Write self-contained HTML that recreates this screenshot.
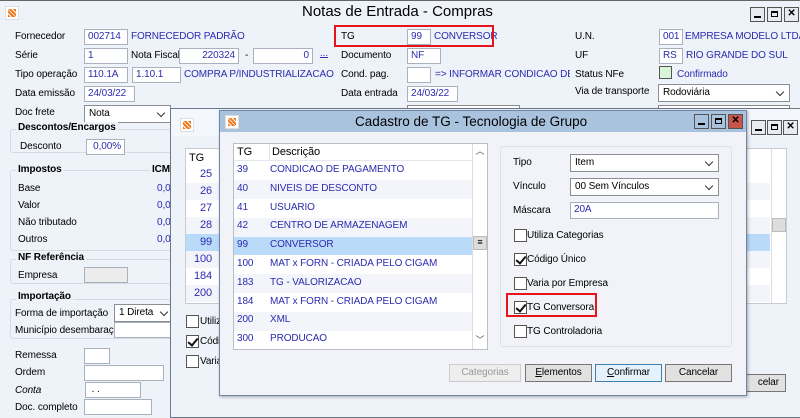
<!DOCTYPE html>
<html><head><meta charset="utf-8"><style>
*{box-sizing:border-box;margin:0;padding:0}
body{width:800px;height:409px;overflow:hidden;background:#eef2f9;font-family:"Liberation Sans",sans-serif;font-size:10px;letter-spacing:-0.1px;color:#000;position:relative}
.a{position:absolute;white-space:nowrap}
.in{position:absolute;background:#fff;border:1px solid #a9b1bd;height:16px;line-height:14px;padding:0 3px;color:#2b2bb0;white-space:nowrap;overflow:hidden}
.bl{color:#2b2bb0}
.sel{position:absolute;background:#fff;border:1px solid #8a8f96;height:18px;line-height:16px;padding:0 4px}
.sel:after{content:"";position:absolute;right:6px;top:4px;width:5px;height:5px;border-right:1.5px solid #333;border-bottom:1.5px solid #333;transform:rotate(45deg)}
.grp{position:absolute;border:1px solid #d6dbe3;border-radius:3px}
.gt{position:absolute;font-weight:bold;background:#eef2f9;padding:0 2px}
.ic{position:absolute;width:14px;height:14px;background:#fff;border:1px solid #ddd}
.ic:after{content:"";position:absolute;left:2px;top:2px;width:8px;height:8px;background:repeating-linear-gradient(45deg,#f07a20 0 2px,#fff 2px 3px)}
.cb{position:absolute;width:13px;height:13px;border:1px solid #555;background:#fff}
.ck:after{content:"";position:absolute;left:3px;top:0px;width:4px;height:8px;border-right:2px solid #111;border-bottom:2px solid #111;transform:rotate(40deg)}
.wb{position:absolute;width:15px;height:15px;border:1px solid #555;background:#e8ecf2}
.btn{position:absolute;height:18px;border:1px solid #777;background:#e1e1e1;text-align:center;line-height:16px}
</style></head><body>
<div class="a" style="left:0;top:0;width:800px;height:1px;background:#666"></div>
<div class="ic" style="left:5px;top:6px"></div>
<div class="a" style="left:302px;top:3px;font-size:15px;letter-spacing:0">Notas de Entrada - Compras</div>
<div class="wb" style="left:750px;top:7px"><div style="position:absolute;left:3px;top:8px;width:7px;height:2px;background:#000"></div></div>
<div class="wb" style="left:767px;top:7px"><div style="position:absolute;left:3px;top:3px;width:7px;height:6px;border:1px solid #000;border-top-width:2px"></div></div>
<div class="wb" style="left:784px;top:7px;text-align:center;line-height:12px;font-weight:bold">✕</div>

<div class="a" style="left:15px;top:31px">Fornecedor</div>
<div class="in" style="left:84px;top:29px;width:44px">002714</div>
<div class="a bl" style="left:131px;top:31px">FORNECEDOR PADRÃO</div>
<div class="a" style="left:15px;top:50px">Série</div>
<div class="in" style="left:84px;top:48px;width:44px">1</div>
<div class="a" style="left:131px;top:50px">Nota Fiscal</div>
<div class="in" style="left:179px;top:48px;width:60px;text-align:right">220324</div>
<div class="a" style="left:245px;top:50px">-</div>
<div class="in" style="left:253px;top:48px;width:60px;text-align:right">0</div>
<div class="a bl" style="left:320px;top:48px;text-decoration:underline">...</div>
<div class="a" style="left:15px;top:69px">Tipo operação</div>
<div class="in" style="left:84px;top:67px;width:44px">110.1A</div>
<div class="in" style="left:132px;top:67px;width:49px">1.10.1</div>
<div class="a bl" style="left:184px;top:69px;width:150px;overflow:hidden">COMPRA P/INDUSTRIALIZACAO C/IC</div>
<div class="a" style="left:15px;top:88px">Data emissão</div>
<div class="in" style="left:84px;top:86px;width:51px">24/03/22</div>
<div class="a" style="left:15px;top:107px">Doc frete</div>
<div class="sel" style="left:84px;top:105px;width:87px;color:#000">Nota</div>

<div class="grp" style="left:10px;top:129px;width:165px;height:24px"></div>
<div class="gt" style="left:16px;top:122px">Descontos/Encargos</div>
<div class="a" style="left:20px;top:141px">Desconto</div>
<div class="in" style="left:86px;top:139px;width:39px;text-align:right">0,00%</div>

<div class="grp" style="left:10px;top:170px;width:165px;height:81px"></div>
<div class="gt" style="left:16px;top:164px">Impostos</div>
<div class="gt" style="left:150px;top:164px">ICM</div>
<div class="a" style="left:18px;top:183px">Base</div><div class="a bl" style="left:157px;top:183px">0,0</div>
<div class="a" style="left:18px;top:200px">Valor</div><div class="a bl" style="left:157px;top:200px">0,0</div>
<div class="a" style="left:18px;top:217px">Não tributado</div><div class="a bl" style="left:157px;top:217px">0,0</div>
<div class="a" style="left:18px;top:234px">Outros</div><div class="a bl" style="left:157px;top:234px">0,0</div>

<div class="grp" style="left:10px;top:259px;width:165px;height:25px"></div>
<div class="gt" style="left:16px;top:252px">NF Referência</div>
<div class="a" style="left:18px;top:270px">Empresa</div>
<div class="in" style="left:84px;top:267px;width:44px;background:#ececec"></div>

<div class="grp" style="left:10px;top:299px;width:165px;height:40px"></div>
<div class="gt" style="left:16px;top:291px">Importação</div>
<div class="a" style="left:15px;top:308px">Forma de importação</div>
<div class="sel" style="left:114px;top:304px;width:60px;color:#000">1 Direta</div>
<div class="a" style="left:15px;top:325px">Município desembaraço</div>
<div class="in" style="left:114px;top:322px;width:60px"></div>

<div class="a" style="left:15px;top:350px">Remessa</div><div class="in" style="left:84px;top:348px;width:26px"></div>
<div class="a" style="left:15px;top:367px">Ordem</div><div class="in" style="left:84px;top:365px;width:80px"></div>
<div class="a" style="left:15px;top:385px;font-style:italic">Conta</div><div class="in" style="left:85px;top:382px;width:56px;color:#000">&nbsp;. .</div>
<div class="a" style="left:15px;top:402px">Doc. completo</div><div class="in" style="left:84px;top:399px;width:68px"></div>

<div class="a" style="left:341px;top:50px">Documento</div>
<div class="in" style="left:407px;top:48px;width:34px">NF</div>
<div class="a" style="left:341px;top:69px">Cond. pag.</div>
<div class="in" style="left:407px;top:67px;width:24px"></div>
<div class="a bl" style="left:435px;top:69px;width:135px;overflow:hidden">=&gt; INFORMAR CONDICAO DE PAG</div>
<div class="a" style="left:341px;top:88px">Data entrada</div>
<div class="in" style="left:407px;top:86px;width:51px">24/03/22</div>
<div class="in" style="left:407px;top:105px;width:113px;border-color:#888"></div>

<div class="a" style="left:341px;top:31px">TG</div>
<div class="in" style="left:407px;top:29px;width:24px">99</div>
<div class="a bl" style="left:434px;top:31px">CONVERSOR</div>
<div class="a" style="left:334px;top:25px;width:160px;height:22px;border:2px solid #e8141c"></div>

<div class="a" style="left:575px;top:31px">U.N.</div>
<div class="in" style="left:659px;top:29px;width:24px">001</div>
<div class="a bl" style="left:685px;top:31px">EMPRESA MODELO LTDA</div>
<div class="a" style="left:575px;top:50px">UF</div>
<div class="in" style="left:659px;top:48px;width:24px">RS</div>
<div class="a bl" style="left:686px;top:50px">RIO GRANDE DO SUL</div>
<div class="a" style="left:575px;top:69px">Status NFe</div>
<div class="a" style="left:659px;top:66px;width:13px;height:13px;background:#d8f5d8;border:1px solid #555"></div>
<div class="a bl" style="left:677px;top:69px">Confirmado</div>
<div class="a" style="left:575px;top:86px">Via de transporte</div>
<div class="sel" style="left:658px;top:84px;width:132px;color:#000">Rodoviária</div>
<div class="in" style="left:658px;top:105px;width:132px;border-color:#888"></div>

<!-- middle window -->
<div class="a" style="left:170px;top:108px;width:640px;height:310px;background:#eef2f9;border:1px solid #6b7788"></div>
<div class="a" style="left:171px;top:109px;width:640px;height:27px;background:#f4f7fc"></div>
<div class="ic" style="left:180px;top:118px"></div>
<div class="wb" style="left:751px;top:120px"><div style="position:absolute;left:3px;top:8px;width:7px;height:2px;background:#000"></div></div>
<div class="wb" style="left:767px;top:120px"><div style="position:absolute;left:3px;top:3px;width:7px;height:6px;border:1px solid #000;border-top-width:2px"></div></div>
<div class="wb" style="left:783px;top:120px;text-align:center;line-height:12px;font-weight:bold">✕</div>
<div class="a" style="left:185px;top:148px;width:602px;height:156px;background:#fff;border:1px solid #c7ccd4"></div>
<div class="a" style="left:186px;top:149px;width:33px;height:18px;line-height:18px;padding-left:3px;font-size:11px">TG</div>
<div class="a" style="left:186px;top:183px;width:584px;height:17px;background:#f3f5fa"></div>
<div class="a" style="left:186px;top:217px;width:584px;height:17px;background:#f3f5fa"></div>
<div class="a" style="left:186px;top:234px;width:584px;height:17px;background:#b9dbf9"></div>
<div class="a" style="left:186px;top:251px;width:584px;height:17px;background:#f3f5fa"></div>
<div class="a" style="left:186px;top:285px;width:584px;height:17px;background:#f3f5fa"></div>
<div class="a bl" style="left:186px;top:166px;width:26px;text-align:right;line-height:17px;font-size:11px">25<br>26<br>27<br>28<br>99<br>100<br>184<br>200</div>
<div class="a" style="left:771px;top:149px;width:15px;height:154px;background:#fff;border-left:1px solid #ddd"></div>
<div class="a" style="left:772px;top:218px;width:14px;height:14px;background:#ddd;border:1px solid #bbb"></div>
<div class="cb" style="left:186px;top:315px"></div><div class="a" style="left:200px;top:316px">Utiliz</div>
<div class="cb ck" style="left:186px;top:335px"></div><div class="a" style="left:200px;top:336px">Códig</div>
<div class="cb" style="left:186px;top:355px"></div><div class="a" style="left:200px;top:356px">Varia</div>
<div class="btn" style="left:735px;top:374px;width:51px;text-align:right;padding-right:6px">celar</div>

<!-- dialog -->
<div class="a" style="left:219px;top:110px;width:528px;height:286px;background:#f1f3f9;border:1px solid #6e87a8;box-shadow:1px 1px 3px rgba(0,0,0,.3)"></div>
<div class="a" style="left:220px;top:111px;width:526px;height:21px;background:#a9c3de"></div>
<div class="ic" style="left:225px;top:115px"></div>
<div class="a" style="left:355px;top:114px;font-size:13.5px;letter-spacing:0">Cadastro de TG - Tecnologia de Grupo</div>
<div class="wb" style="left:694px;top:114px;background:#a9c3de"><div style="position:absolute;left:3px;top:8px;width:7px;height:2px;background:#000"></div></div>
<div class="wb" style="left:711px;top:114px;background:#a9c3de"><div style="position:absolute;left:3px;top:3px;width:7px;height:6px;border:1px solid #000;border-top-width:2px"></div></div>
<div class="wb" style="left:728px;top:114px;background:#c9554a;text-align:center;line-height:12px;font-weight:bold">✕</div>

<div class="a" style="left:233px;top:143px;width:255px;height:207px;background:#fff;border:1px solid #b9bec6"></div>
<div class="a" style="left:234px;top:144px;width:238px;height:17px;border-bottom:1px solid #e4e7ec;line-height:16px;font-size:11px"><span style="position:absolute;left:3px">TG</span><span style="position:absolute;left:35px;top:0;height:16px;border-left:1px solid #e0e3e8"></span><span style="position:absolute;left:38px">Descrição</span></div>
<div class="a" style="left:234px;top:180px;width:238px;height:19px;background:#f3f5fa"></div>
<div class="a" style="left:234px;top:218px;width:238px;height:19px;background:#f3f5fa"></div>
<div class="a" style="left:234px;top:237px;width:238px;height:18px;background:#b9dbf9"></div>
<div class="a" style="left:234px;top:274px;width:238px;height:19px;background:#f3f5fa"></div>
<div class="a" style="left:234px;top:312px;width:238px;height:19px;background:#f3f5fa"></div>
<div class="a bl" style="left:237px;top:161px;line-height:18.8px">39<br>40<br>41<br>42<br>99<br>100<br>183<br>184<br>200<br>300</div>
<div class="a bl" style="left:270px;top:161px;line-height:18.8px">CONDICAO DE PAGAMENTO<br>NIVEIS DE DESCONTO<br>USUARIO<br>CENTRO DE ARMAZENAGEM<br>CONVERSOR<br>MAT x FORN - CRIADA PELO CIGAM<br>TG - VALORIZACAO<br>MAT x FORN - CRIADA PELO CIGAM<br>XML<br>PRODUCAO</div>
<div class="a" style="left:472px;top:144px;width:15px;height:205px;background:#fff;border-left:1px solid #ddd"></div>
<div class="a" style="left:473px;top:144px;width:14px;height:16px;text-align:center;font-size:9px;color:#555">︿</div>
<div class="a" style="left:473px;top:236px;width:14px;height:14px;background:#ddd;border:1px solid #bbb;text-align:center;line-height:11px;font-size:9px">≡</div>
<div class="a" style="left:473px;top:333px;width:14px;height:16px;text-align:center;font-size:9px;color:#555">﹀</div>

<div class="a" style="left:500px;top:146px;width:232px;height:201px;border:1px solid #dde1e8;border-radius:3px"></div>
<div class="a" style="left:513px;top:157px">Tipo</div>
<div class="sel" style="left:570px;top:154px;width:149px">Item</div>
<div class="a" style="left:513px;top:181px">Vínculo</div>
<div class="sel" style="left:570px;top:178px;width:149px">00 Sem Vínculos</div>
<div class="a" style="left:513px;top:205px">Máscara</div>
<div class="in" style="left:570px;top:202px;width:149px;height:17px">20A</div>
<div class="cb" style="left:514px;top:229px"></div><div class="a" style="left:527px;top:230px">Utiliza Categorias</div>
<div class="cb ck" style="left:514px;top:253px"></div><div class="a" style="left:527px;top:254px">Código Único</div>
<div class="cb" style="left:514px;top:277px"></div><div class="a" style="left:527px;top:278px">Varia por Empresa</div>
<div class="cb ck" style="left:514px;top:301px"></div><div class="a" style="left:527px;top:302px">TG Conversora</div>
<div class="a" style="left:506px;top:293px;width:91px;height:24px;border:2px solid #e8141c"></div>
<div class="cb" style="left:514px;top:325px"></div><div class="a" style="left:527px;top:326px">TG Controladoria</div>

<div class="btn" style="left:449px;top:364px;width:72px;color:#999;border-color:#ccc;background:#eee">Categorias</div>
<div class="btn" style="left:525px;top:364px;width:67px"><u>E</u>lementos</div>
<div class="btn" style="left:595px;top:364px;width:67px;border-color:#3c7fb1;background:#e5f1fb"><u>C</u>onfirmar</div>
<div class="btn" style="left:665px;top:364px;width:67px">Cancelar</div>
</body></html>
